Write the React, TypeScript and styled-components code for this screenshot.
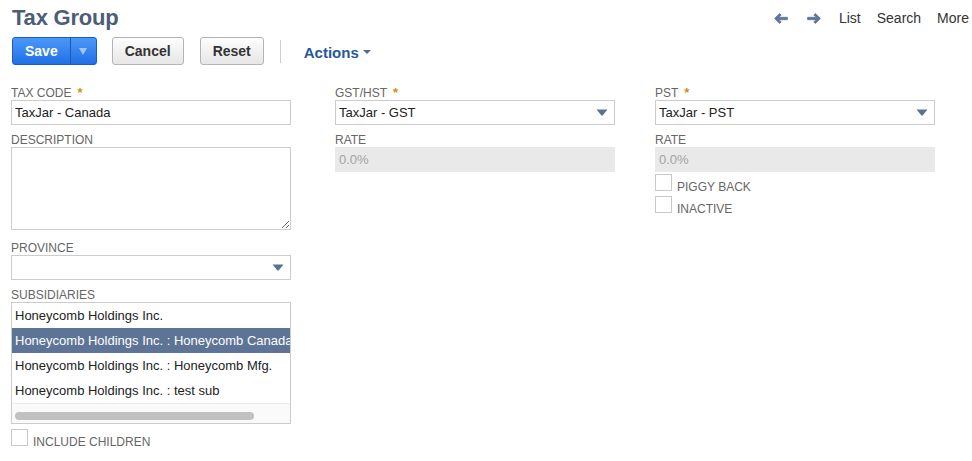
import React from "react";
import styled, { createGlobalStyle } from "styled-components";

const GlobalStyle = createGlobalStyle`
  html, body { margin: 0; padding: 0; background: #ffffff; }
  body { font-family: "Liberation Sans", Arial, sans-serif; color: #333; }
  * { box-sizing: border-box; }
`;

const Page = styled.div`
  width: 972px;
  height: 461px;
  padding: 0 3px 0 11px;
  overflow: hidden;
`;

const Header = styled.div`
  display: flex;
  justify-content: space-between;
  align-items: flex-start;
`;

const Title = styled.h1`
  margin: 0;
  padding: 5px 0 0 1px;
  font-size: 22px;
  line-height: 26px;
  font-weight: bold;
  color: #4c5d78;
  letter-spacing: -0.2px;
`;

const Nav = styled.nav`
  display: flex;
  align-items: center;
  gap: 16px;
  margin-top: 10px;
  font-size: 14px;
  line-height: 16px;
  color: #333;
`;

const NavArrows = styled.div`
  display: flex;
  align-items: center;
  gap: 19px;
  margin-right: 2px;
`;

const NavLink = styled.span`
  color: #333;
`;

const Toolbar = styled.div`
  display: flex;
  align-items: center;
  margin-top: 6px;
  padding-left: 1px;
`;

const SplitButton = styled.div`
  display: flex;
  height: 28px;
  border: 1px solid #1c5cc0;
  border-radius: 3px;
  background: linear-gradient(#4b97f8, #2070e6);
  overflow: hidden;
`;

const SavePart = styled.div`
  display: flex;
  align-items: center;
  padding: 0 12px;
  color: #fff;
  font-weight: bold;
  font-size: 14px;
`;

const ArrowPart = styled.div`
  width: 26px;
  display: flex;
  align-items: center;
  justify-content: center;
  border-left: 1px solid #1a58b8;
`;

const DownTri = styled.span<{ $w: number; $h: number; $c: string }>`
  display: inline-block;
  width: 0;
  height: 0;
  border-left: ${(p) => p.$w / 2}px solid transparent;
  border-right: ${(p) => p.$w / 2}px solid transparent;
  border-top: ${(p) => p.$h}px solid ${(p) => p.$c};
`;

const GrayButton = styled.div<{ $ml: number }>`
  height: 28px;
  display: flex;
  align-items: center;
  margin-left: ${(p) => p.$ml}px;
  padding: 0 12px;
  border: 1px solid #b4b4b4;
  border-radius: 3px;
  background: linear-gradient(#fdfdfd, #e6e6e6);
  color: #333;
  font-weight: bold;
  font-size: 14px;
`;

const Divider = styled.div`
  width: 1px;
  height: 23px;
  background: #cfcfcf;
  margin: 0 23px 0 16px;
`;

const Actions = styled.div`
  display: flex;
  align-items: center;
  gap: 4px;
  color: #27579d;
  font-weight: bold;
  font-size: 15px;
  padding-top: 2px;
`;

const Form = styled.div`
  display: grid;
  grid-template-columns: 324px 320px 280px;
  margin-top: 21px;
`;

const Column = styled.div`
  display: flex;
  flex-direction: column;
`;

const Field = styled.div<{ $mb?: number }>`
  display: flex;
  flex-direction: column;
  margin-bottom: ${(p) => (p.$mb ?? 8)}px;
`;

const Label = styled.div`
  display: flex;
  height: 14px;
  font-size: 12px;
  line-height: 14px;
  color: #666;
  text-transform: uppercase;
`;

const Req = styled.span`
  color: #d88a14;
  margin-left: 6px;
  font-size: 13px;
  font-weight: bold;
`;

const TextInput = styled.input`
  width: 280px;
  height: 25px;
  margin: 0;
  border: 1px solid #cccccc;
  border-radius: 0;
  padding: 0 3px;
  font-family: "Liberation Sans", Arial, sans-serif;
  font-size: 13px;
  color: #222;
  outline: none;
`;

const TextArea = styled.textarea`
  display: block;
  width: 280px;
  height: 83px;
  margin: 0;
  border: 1px solid #cccccc;
  border-radius: 0;
  padding: 3px;
  font-family: "Liberation Sans", Arial, sans-serif;
  font-size: 13px;
  outline: none;
`;

const SelectBox = styled.div`
  width: 280px;
  height: 25px;
  display: flex;
  align-items: center;
  justify-content: space-between;
  border: 1px solid #cccccc;
  padding: 0 6px 0 3px;
  font-size: 13px;
  color: #222;
`;

const ReadOnlyBox = styled.div`
  width: 280px;
  height: 25px;
  display: flex;
  align-items: center;
  background: #e9e9e9;
  padding: 0 4px;
  font-size: 13px;
  color: #a3a3a3;
`;

const ListBox = styled.div`
  width: 280px;
  height: 122px;
  border: 1px solid #cccccc;
  display: flex;
  flex-direction: column;
  overflow: hidden;
`;

const ListRow = styled.div<{ $selected?: boolean }>`
  height: 25px;
  line-height: 25px;
  padding-left: 3px;
  font-size: 13px;
  white-space: nowrap;
  overflow: hidden;
  color: ${(p) => (p.$selected ? "#ffffff" : "#222")};
  background: ${(p) => (p.$selected ? "#5e7496" : "transparent")};
`;

const ScrollTrack = styled.div`
  flex: 1;
  background: #fafafa;
  border-top: 1px solid #ececec;
  padding: 8px 0 0 3px;
`;

const ScrollThumb = styled.div`
  width: 239px;
  height: 8px;
  border-radius: 4px;
  background: #c1c1c1;
`;

const CheckRow = styled.div<{ $mt: number }>`
  display: flex;
  align-items: flex-start;
  height: 17px;
  overflow: visible;
  margin-top: ${(p) => p.$mt}px;
`;

const CheckBox = styled.span`
  width: 17px;
  height: 17px;
  border: 1px solid #c9c9c9;
  background: #fff;
  flex: none;
`;

const CheckText = styled.span`
  margin-left: 5px;
  padding-top: 6px;
  font-size: 12px;
  line-height: 14px;
  color: #666;
  text-transform: uppercase;
  white-space: nowrap;
`;

const ArrowIcon = ({ dir }: { dir: "left" | "right" }) => (
  <svg width="14" height="11" viewBox="0 0 14 11" style={{ transform: dir === "right" ? "scaleX(-1)" : undefined }}>
    <path
      d="M5.6 0.6 L0.6 5.5 L5.6 10.4 L7.2 8.9 L4.9 6.7 L13.4 6.7 L13.4 4.3 L4.9 4.3 L7.2 2.1 Z"
      fill="#5d7699"
      stroke="#5d7699"
      strokeWidth="0.8"
      strokeLinejoin="round"
    />
  </svg>
);

const SelectArrow = () => (
  <svg width="12" height="7" viewBox="0 0 12 7">
    <path d="M0.5 0.5 L11.5 0.5 L6.8 6.2 Q6 7 5.2 6.2 Z" fill="#5a7192" />
  </svg>
);

const subsidiaries = [
  "Honeycomb Holdings Inc.",
  "Honeycomb Holdings Inc. : Honeycomb Canada",
  "Honeycomb Holdings Inc. : Honeycomb Mfg.",
  "Honeycomb Holdings Inc. : test sub",
];

export default function App() {
  return (
    <Page>
      <GlobalStyle />
      <Header>
        <Title>Tax Group</Title>
        <Nav>
          <NavArrows>
            <ArrowIcon dir="left" />
            <ArrowIcon dir="right" />
          </NavArrows>
          <NavLink>List</NavLink>
          <NavLink>Search</NavLink>
          <NavLink>More</NavLink>
        </Nav>
      </Header>

      <Toolbar>
        <SplitButton>
          <SavePart>Save</SavePart>
          <ArrowPart>
            <DownTri $w={8} $h={7} $c="#a9c2ea" />
          </ArrowPart>
        </SplitButton>
        <GrayButton $ml={15}>Cancel</GrayButton>
        <GrayButton $ml={16}>Reset</GrayButton>
        <Divider />
        <Actions>
          Actions
          <DownTri $w={8} $h={4} $c="#4f6b95" />
        </Actions>
      </Toolbar>

      <Form>
        <Column>
          <Field>
            <Label>
              Tax Code<Req>*</Req>
            </Label>
            <TextInput readOnly value="TaxJar - Canada" />
          </Field>
          <Field $mb={11}>
            <Label>Description</Label>
            <TextArea readOnly value="" />
          </Field>
          <Field>
            <Label>Province</Label>
            <SelectBox>
              <span></span>
              <SelectArrow />
            </SelectBox>
          </Field>
          <Field $mb={0}>
            <Label>Subsidiaries</Label>
            <ListBox>
              {subsidiaries.map((s, i) => (
                <ListRow key={s} $selected={i === 1}>
                  {s}
                </ListRow>
              ))}
              <ScrollTrack>
                <ScrollThumb />
              </ScrollTrack>
            </ListBox>
          </Field>
          <CheckRow $mt={5}>
            <CheckBox />
            <CheckText>Include Children</CheckText>
          </CheckRow>
        </Column>

        <Column>
          <Field>
            <Label>
              GST/HST<Req>*</Req>
            </Label>
            <SelectBox>
              <span>TaxJar - GST</span>
              <SelectArrow />
            </SelectBox>
          </Field>
          <Field>
            <Label>Rate</Label>
            <ReadOnlyBox>0.0%</ReadOnlyBox>
          </Field>
        </Column>

        <Column>
          <Field>
            <Label>
              PST<Req>*</Req>
            </Label>
            <SelectBox>
              <span>TaxJar - PST</span>
              <SelectArrow />
            </SelectBox>
          </Field>
          <Field $mb={0}>
            <Label>Rate</Label>
            <ReadOnlyBox>0.0%</ReadOnlyBox>
          </Field>
          <CheckRow $mt={2}>
            <CheckBox />
            <CheckText>Piggy Back</CheckText>
          </CheckRow>
          <CheckRow $mt={5}>
            <CheckBox />
            <CheckText>Inactive</CheckText>
          </CheckRow>
        </Column>
      </Form>
    </Page>
  );
}
